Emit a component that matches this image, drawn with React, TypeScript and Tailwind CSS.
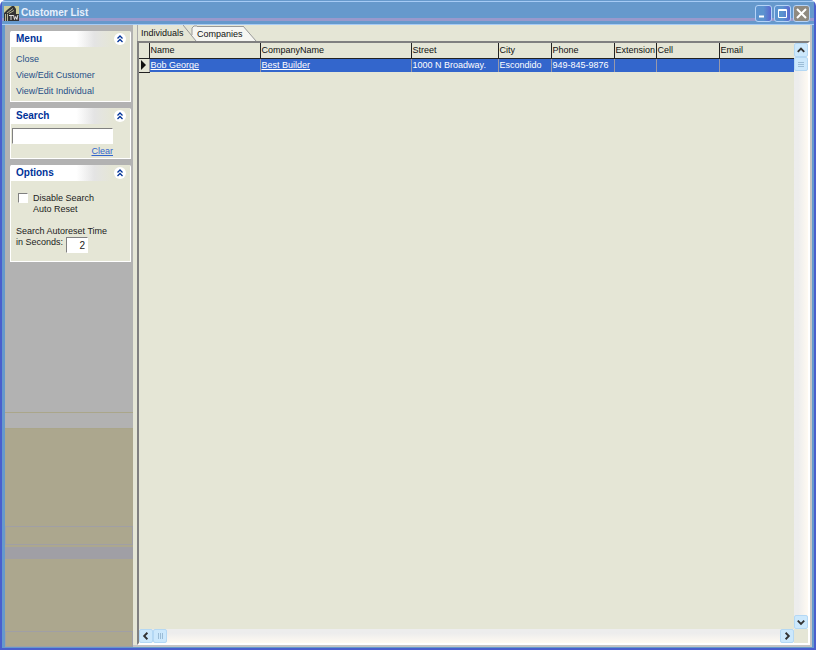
import React, { useState } from 'react';
import type { ReactNode } from 'react';
import { clsx } from 'clsx';

interface Customer {
  name: string;
  company: string;
  street: string;
  city: string;
  phone: string;
  extension: string;
  cell: string;
  email: string;
}

const customers: Customer[] = [
  {
    name: 'Bob George',
    company: 'Best Builder',
    street: '1000 N Broadway.',
    city: 'Escondido',
    phone: '949-845-9876',
    extension: '',
    cell: '',
    email: '',
  },
];

const columns: { key: keyof Customer; label: string; width: string; link?: boolean }[] = [
  { key: 'name', label: 'Name', width: 'w-[111px]', link: true },
  { key: 'company', label: 'CompanyName', width: 'w-[151px]', link: true },
  { key: 'street', label: 'Street', width: 'w-[87px]' },
  { key: 'city', label: 'City', width: 'w-[53px]' },
  { key: 'phone', label: 'Phone', width: 'w-[63px]' },
  { key: 'extension', label: 'Extension', width: 'w-[42px]' },
  { key: 'cell', label: 'Cell', width: 'w-[63px]' },
  { key: 'email', label: 'Email', width: '' },
];

const AppIcon = () => (
  <svg viewBox="0 0 15 15" className="size-[15px]" aria-hidden="true">
    <rect width="15" height="15" fill="#cccc99" />
    <path d="M0 7 3 4 8 0h2l2 3v5h3v7H0z" fill="#333" />
    <path d="M1.500 15V8M3.500 15V8M3 7l6-4.500M5 7.500l5-3" stroke="#b5b595" fill="none" />
    <path d="M5 9.500h4M7 9.500V14M9.500 9l1 4.500 1.200-3 1.200 3 1-4.500" stroke="#f2f2f2" strokeWidth="0.9" fill="none" />
  </svg>
);

const CaptionButton = ({ label, close, children }: { label: string; close?: boolean; children: ReactNode }) => (
  <button
    aria-label={label}
    className={clsx(
      'flex size-[17px] items-center justify-center rounded-[3px] border border-[#b5d3f7]',
      close ? 'bg-[#8f8a80]' : 'bg-linear-to-r from-[#5c93cf] from-50% to-[#5a66cf]'
    )}
  >
    <svg viewBox="0 0 15 15" className="size-[15px]" fill="none" stroke="#fff">
      {children}
    </svg>
  </button>
);

const arrows = {
  up: 'M4 9.500 7.500 6 11 9.500',
  down: 'M4 6 7.500 9.500 11 6',
  left: 'M9 4 5.500 7.500 9 11',
  right: 'M6 4 9.500 7.500 6 11',
};

const ScrollButton = ({ dir }: { dir: keyof typeof arrows }) => (
  <button aria-label={`Scroll ${dir}`} className="size-[14px] shrink-0 rounded-[2px] border border-[#b4d8f4] bg-[#cce8fc]">
    <svg viewBox="1 1 13 13" className="size-3" fill="none" stroke="#333" strokeWidth="2">
      <path d={arrows[dir]} />
    </svg>
  </button>
);

const Panel = ({ title, children }: { title: string; children: ReactNode }) => {
  const [open, setOpen] = useState(true);

  return (
    <section className="rounded-t-[2px] border border-t-0 border-white bg-[#e5e6d6]">
      <h2 className="flex h-4 items-center justify-between bg-linear-to-r from-white from-55% via-[#e4e4e4] via-70% to-[#e5e6d6] to-85% pr-1 pl-[5px] text-[10px] font-bold text-[#003399]">
        {title}
        <button
          aria-label={`Toggle ${title}`}
          onClick={() => setOpen(!open)}
          className="flex size-3 items-center justify-center rounded-full bg-white"
        >
          <svg viewBox="0 0 12 12" className="size-3" fill="none" stroke="#003399" strokeWidth="1.300">
            <path d="M3.500 5.500 6 3l2.500 2.500M3.500 9 6 6.500 8.500 9" />
          </svg>
        </button>
      </h2>
      {open && children}
    </section>
  );
};

const sunken = 'border border-t-[#808080] border-l-[#808080] border-r-white border-b-white bg-white outline-none';

const Sidebar = () => {
  const [search, setSearch] = useState('');

  return (
    <aside className="flex w-32 shrink-0 flex-col bg-[#b2b2b2]">
      <div className="flex flex-col gap-[6px] pt-[6px] pr-[2px] pl-[5px]">
        <Panel title="Menu">
          <nav className="flex flex-col items-start pt-1 pb-[2px] pl-[5px] leading-4 text-[#1f4f87]">
            <a href="#close">Close</a>
            <a href="#customer">View/Edit Customer</a>
            <a href="#individual">View/Edit Individual</a>
          </nav>
        </Panel>

        <Panel title="Search">
          <div className="flex flex-col items-end pt-1 pr-[17px] pl-px">
            <input
              aria-label="Search"
              value={search}
              onChange={(e) => setSearch(e.target.value)}
              className={clsx(sunken, 'h-4 w-full px-1')}
            />
            <button onClick={() => setSearch('')} className="h-[14px] text-[#3366cc] underline">
              Clear
            </button>
          </div>
        </Panel>

        <Panel title="Options">
          <div className="flex flex-col gap-[11px] pt-3 pb-2 pl-[5px] leading-[11px] text-[#222]">
            <label className="flex gap-[5px] pl-[2px]">
              <input type="checkbox" className={clsx(sunken, 'size-[10px] appearance-none checked:bg-[#003399]')} />
              <span>
                Disable Search
                <br />
                Auto Reset
              </span>
            </label>
            <label>
              Search Autoreset Time
              <span className="flex items-start gap-[3px]">
                in Seconds:
                <input defaultValue="2" className={clsx(sunken, 'h-4 w-[22px] px-[2px] text-right text-[10px]')} />
              </span>
            </label>
          </div>
        </Panel>
      </div>

      {/* empty docking bands under the panels */}
      <div className="mt-auto h-[17px] border-y border-[#aaa68a]" />
      <div className="flex h-[35%] flex-col bg-[#aca78e]">
        <div className="flex-4" />
        <div className="h-[19px] border border-[#a09fa5]" />
        <div className="mt-[2px] h-3 bg-[#a09fa5]" />
        <div className="flex-3" />
        <div className="h-4 border border-[#a09fa5]" />
      </div>
    </aside>
  );
};

const CustomerTable = () => (
  <table className="w-full table-fixed border-collapse text-left">
    <colgroup>
      <col className="w-[10px]" />
      {columns.map((col) => (
        <col key={col.key} className={col.width} />
      ))}
    </colgroup>
    <thead>
      <tr className="h-[15px] border-b border-[#222]">
        <th className="p-0" />
        {columns.map((col) => (
          <th key={col.key} className="border-l border-[#222] p-0 pl-px font-normal whitespace-nowrap">
            {col.label}
          </th>
        ))}
      </tr>
    </thead>
    <tbody>
      {customers.map((customer) => (
        <tr key={customer.name} className="h-[14px] bg-[#3366cc] text-white">
          <td className="border-b border-[#222] bg-[#e5e6d6] p-0">
            <svg viewBox="0 0 8 10" className="h-[10px] w-2">
              <path d="M2 0v10l5-5z" fill="#111" />
            </svg>
          </td>
          {columns.map((col) => (
            <td key={col.key} className="border-l border-[#99a] p-0 pl-px whitespace-nowrap">
              {col.link ? (
                <a href="#record" className="underline">
                  {customer[col.key]}
                </a>
              ) : (
                customer[col.key]
              )}
            </td>
          ))}
        </tr>
      ))}
    </tbody>
  </table>
);

const App = () => {
  const [tab, setTab] = useState('Individuals');

  return (
    <div className="flex h-screen flex-col rounded-t-md border-x-2 border-b-2 border-[#4a5fcc] bg-[#6699cc] font-['Liberation_Sans',Arial,sans-serif] text-[9px] leading-3 text-[#111]">
      <header className="shrink-0 rounded-t-md border-t border-[#6699cc]">
        <div className="flex h-6 items-center gap-[2px] border-y border-[#a6cbf5] bg-[linear-gradient(#6699cc_73%,#9999cc_73%,#9999cc_88%,#6699cc_88%)] pr-1 pl-[2px]">
          <AppIcon />
          <h1 className="flex-1 text-[10px] font-bold text-[#e6f0fc]">Customer List</h1>
          <div className="flex gap-[2px]">
            <CaptionButton label="Minimize">
              <path d="M3 10.500h5" strokeWidth="2" />
            </CaptionButton>
            <CaptionButton label="Maximize">
              <path d="M3.500 3.500h8v8h-8zM3 4.500h9" />
            </CaptionButton>
            <CaptionButton label="Close" close>
              <path d="m3 3 9 9M12 3l-9 9" strokeWidth="2" />
            </CaptionButton>
          </div>
        </div>
      </header>

      <div className="mr-[2px] mb-px ml-[3px] flex min-h-0 flex-1 bg-[#e5e6d6]">
        <Sidebar />

        <main className="flex min-w-0 flex-1 flex-col border-r-2 border-b-2 border-[#c4c4c4] pl-1">
          <div role="tablist" className="flex h-4 shrink-0 items-end">
            <button
              role="tab"
              aria-selected={tab === 'Individuals'}
              onClick={() => setTab('Individuals')}
              className="h-4 w-[46px] border-l border-[#aaa] pl-[3px] text-left"
            >
              Individuals
            </button>
            <svg viewBox="0 0 14 16" className="h-4 w-[14px]">
              <path d="M9 3 11 1h3v15h-1L9 11z" fill="#f6f6f2" />
              <path d="M0 0 13 16M9 10V3l2-2h3" fill="none" stroke="#999" />
            </svg>
            <button
              role="tab"
              aria-selected={tab === 'Companies'}
              onClick={() => setTab('Companies')}
              className="h-[15px] border-t border-[#999] bg-[#f6f6f2] text-left"
            >
              Companies
            </button>
            <svg viewBox="0 0 14 15" className="h-[15px] w-[14px]">
              <path d="M0 0 13 15H0z" fill="#f6f6f2" />
              <path d="M0 0 13 15" stroke="#999" />
            </svg>
          </div>

          <div className="flex min-h-0 flex-1 flex-col border-2 border-t-[#808080] border-r-white border-b-white border-l-[#808080]">
            <div className="flex min-h-0 flex-1">
              <div className="min-w-0 flex-1">
                <CustomerTable />
              </div>
              <div className="flex w-[14px] shrink-0 flex-col bg-linear-to-r from-[#ededed] from-30% to-[#fffaf2]">
                <ScrollButton dir="up" />
                <div className="flex h-[14px] flex-col items-center justify-center gap-px rounded-[2px] border border-[#b4d8f4] bg-[#cce8fc]">
                  <span className="h-px w-[6px] bg-[#9bbcd6]" />
                  <span className="h-px w-[6px] bg-[#9bbcd6]" />
                  <span className="h-px w-[6px] bg-[#9bbcd6]" />
                </div>
                <div className="flex-1" />
                <ScrollButton dir="down" />
              </div>
            </div>
            <div className="flex h-[14px] shrink-0 pr-[14px]">
              <div className="flex flex-1 bg-linear-to-b from-[#ededed] from-30% to-[#fffaf2]">
                <ScrollButton dir="left" />
                <div className="flex w-[14px] items-center justify-center gap-px rounded-[2px] border border-[#b4d8f4] bg-[#cce8fc]">
                  <span className="h-[6px] w-px bg-[#9bbcd6]" />
                  <span className="h-[6px] w-px bg-[#9bbcd6]" />
                  <span className="h-[6px] w-px bg-[#9bbcd6]" />
                </div>
                <div className="flex-1" />
                <ScrollButton dir="right" />
              </div>
            </div>
          </div>
        </main>
      </div>
    </div>
  );
};

export default App;
